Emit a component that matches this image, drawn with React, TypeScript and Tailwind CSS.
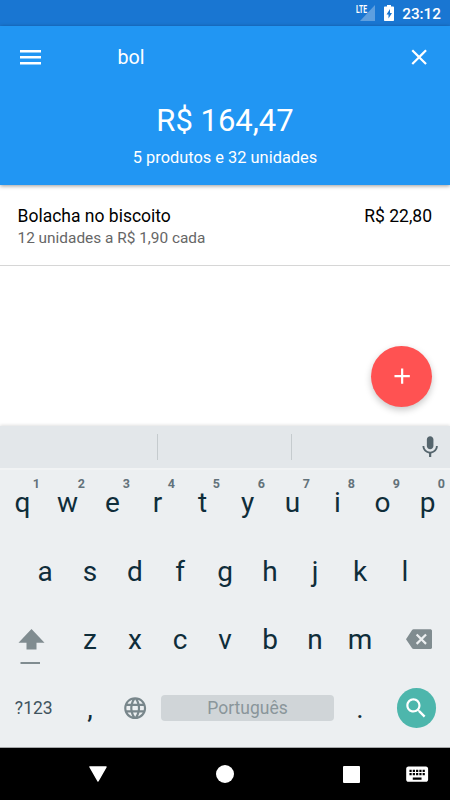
import type { ReactNode } from "react";

interface IconProps {
  path: string;
  className?: string;
}

interface Product {
  name: string;
  detail: string;
  total: string;
}

const PRODUCTS: Product[] = [
  {
    name: "Bolacha no biscoito",
    detail: "12 unidades a R$ 1,90 cada",
    total: "R$ 22,80",
  },
];

const TOP_ROW = ["q", "w", "e", "r", "t", "y", "u", "i", "o", "p"];
const HOME_ROW = ["a", "s", "d", "f", "g", "h", "j", "k", "l"];
const BOTTOM_ROW = ["z", "x", "c", "v", "b", "n", "m"];

const ICONS = {
  close:
    "M19 6.41L17.59 5 12 10.59 6.41 5 5 6.41 10.59 12 5 17.59 6.41 19 12 13.41 17.59 19 19 17.59 13.41 12z",
  add: "M19 13h-6v6h-2v-6H5v-2h6V5h2v6h6v2z",
  mic: "M12 14c1.66 0 2.99-1.34 2.99-3L15 5c0-1.66-1.34-3-3-3S9 3.34 9 5v6c0 1.66 1.34 3 3 3zm5.3-3c0 3-2.54 5.1-5.3 5.1S6.7 14 6.7 11H5c0 3.41 2.72 6.23 6 6.72V21h2v-3.28c3.28-.48 6-3.3 6-6.72h-1.7z",
  backspace:
    "M22 3H7c-.69 0-1.23.35-1.59.88L0 12l5.41 8.11c.36.53.9.89 1.59.89h15c1.1 0 2-.9 2-2V5c0-1.1-.9-2-2-2zm-3 12.59L17.59 17 14 13.41 10.41 17 9 15.59 12.59 12 9 8.41 10.41 7 14 10.59 17.59 7 19 8.41 15.41 12 19 15.59z",
  language:
    "M11.99 2C6.47 2 2 6.48 2 12s4.47 10 9.99 10C17.52 22 22 17.52 22 12S17.52 2 11.99 2zm6.93 6h-2.95c-.32-1.25-.78-2.45-1.38-3.56 1.84.63 3.37 1.91 4.33 3.56zM12 4.04c.83 1.2 1.48 2.53 1.91 3.96h-3.82c.43-1.43 1.08-2.76 1.91-3.96zM4.26 14C4.1 13.36 4 12.69 4 12s.1-1.36.26-2h3.38c-.08.66-.14 1.32-.14 2 0 .68.06 1.34.14 2H4.26zm.82 2h2.95c.32 1.25.78 2.45 1.38 3.56-1.84-.63-3.37-1.9-4.33-3.56zm2.95-8H5.08c.96-1.66 2.49-2.93 4.33-3.56C8.81 5.55 8.35 6.75 8.03 8zM12 19.96c-.83-1.2-1.48-2.53-1.91-3.96h3.82c-.43 1.43-1.08 2.76-1.91 3.96zM14.34 14H9.66c-.09-.66-.16-1.32-.16-2 0-.68.07-1.35.16-2h4.68c.09.65.16 1.32.16 2 0 .68-.07 1.34-.16 2zm.25 5.56c.6-1.11 1.06-2.31 1.38-3.56h2.95c-.96 1.65-2.49 2.93-4.33 3.56zM16.36 14c.08-.66.14-1.32.14-2 0-.68-.06-1.34-.14-2h3.38c.16.64.26 1.31.26 2s-.1 1.36-.26 2h-3.38z",
  search:
    "M15.5 14h-.79l-.28-.27C15.41 12.59 16 11.11 16 9.5 16 5.91 13.09 3 9.5 3S3 5.91 3 9.5 5.91 16 9.5 16c1.61 0 3.09-.59 4.23-1.57l.27.28v.79l5 4.99L20.49 19l-4.99-5zm-6 0C7.01 14 5 11.99 5 9.5S7.01 5 9.5 5 14 7.01 14 9.5 11.99 14 9.5 14z",
  keyboard:
    "M20 5H4c-1.1 0-1.99.9-1.99 2L2 17c0 1.1.9 2 2 2h16c1.1 0 2-.9 2-2V7c0-1.1-.9-2-2-2zm-9 3h2v2h-2V8zm0 3h2v2h-2v-2zM8 8h2v2H8V8zm0 3h2v2H8v-2zm-1 2H5v-2h2v2zm0-3H5V8h2v2zm9 7H8v-2h8v2zm0-4h-2v-2h2v2zm0-3h-2V8h2v2zm3 3h-2v-2h2v2zm0-3h-2V8h2v2z",
};

function Icon({ path, className = "size-[26.3px]" }: IconProps) {
  return (
    <svg
      className={`shrink-0 ${className}`}
      viewBox="0 0 24 24"
      fill="currentColor"
      aria-hidden="true"
    >
      <path d={path} />
    </svg>
  );
}

function StatusBar() {
  return (
    <div className="flex h-[26px] shrink-0 items-center justify-end bg-[#1976d2] pr-[9px] text-white">
      <div className="relative mr-[9px] h-4 w-[19px]">
        <span className="absolute top-0 left-0 origin-left scale-x-[0.68] text-[10px] leading-[9px] font-bold">
          LTE
        </span>
        <svg className="ml-1 h-4 w-[15px]" viewBox="0 0 15 16" aria-hidden="true">
          <path d="M15 0v16H0z" fill="#fff" fillOpacity=".3" />
        </svg>
      </div>
      <svg className="mr-2 h-4 w-[10px]" viewBox="0 0 10 16" aria-hidden="true">
        <path
          d="M3 0h4v1.6h2c.6 0 1 .4 1 1V15c0 .6-.4 1-1 1H1c-.6 0-1-.4-1-1V2.6c0-.6.4-1 1-1h2z"
          fill="#fff"
        />
        <path d="M6 4L2.5 9.5h2v4L8 8H6z" fill="#1976d2" />
      </svg>
      <span className="pt-px text-[15.3px] leading-5 font-medium">23:12</span>
    </div>
  );
}

function Header() {
  return (
    <header className="relative z-10 flex h-[159px] shrink-0 flex-col bg-[#2196f3] text-white shadow-[0_1px_4px_rgba(0,0,0,0.4)]">
      <div className="flex h-[62px] items-center pr-[17.5px] pl-5">
        <button type="button" aria-label="Menu">
          <svg className="h-[15px] w-[21px]" viewBox="0 0 21 15" aria-hidden="true">
            <path d="M0 0h21v2.5H0zM0 6h21v2.5H0zM0 12h21v2.5H0z" fill="currentColor" />
          </svg>
        </button>
        <span className="ml-[76.5px] flex-1 pt-px text-[19.7px] leading-6">bol</span>
        <button type="button" aria-label="Limpar busca">
          <Icon path={ICONS.close} />
        </button>
      </div>
      <div className="flex flex-col items-center pt-[15px]">
        <p className="text-[31px] leading-9">R$ 164,47</p>
        <p className="mt-[9px] text-[16.4px] leading-5">5 produtos e 32 unidades</p>
      </div>
    </header>
  );
}

function ProductRow({ product }: { product: Product }) {
  return (
    <li className="flex h-[81px] justify-between border-b border-[#d6d6d6] px-[17.5px] pt-5">
      <div>
        <p className="text-[17.5px] leading-[22px] text-black">{product.name}</p>
        <p className="text-[15.4px] leading-[22px] text-[#666]">{product.detail}</p>
      </div>
      <p className="pr-[0.5px] text-[17.5px] leading-[22px] text-black">{product.total}</p>
    </li>
  );
}

function Key({ label, hint }: { label: string; hint?: string }) {
  return (
    <button
      type="button"
      className="relative flex w-[45px] items-center justify-center pt-[2px] text-[28px] leading-8"
    >
      {label}
      {hint && (
        <span className="absolute top-2 right-[5px] text-[12.5px] leading-4 font-bold text-[#63727a]">
          {hint}
        </span>
      )}
    </button>
  );
}

function KeyRow({ children }: { children: ReactNode }) {
  return <div className="flex flex-1 justify-center">{children}</div>;
}

function Keyboard() {
  return (
    <section className="flex h-[322px] shrink-0 flex-col border-b border-[#a5a7a9] bg-[#eceff1] text-[#0f2d3a] shadow-[0_-1px_3px_rgba(0,0,0,0.12)]">
      <div className="flex h-[42px] shrink-0 items-center bg-[#e3e7ea] pr-[7px] shadow-[0_2px_0_#f1f3f4]">
        <div className="h-[26px] w-[158px] border-r border-[#c5cbce]" />
        <div className="h-[26px] w-[134px] border-r border-[#c5cbce]" />
        <div className="flex flex-1 justify-end text-[#55656d]">
          <Icon path={ICONS.mic} />
        </div>
      </div>

      <div className="flex h-[274px] shrink-0 flex-col">
        <KeyRow>
          {TOP_ROW.map((key, i) => (
            <Key key={key} label={key} hint={String((i + 1) % 10)} />
          ))}
        </KeyRow>
        <KeyRow>
          {HOME_ROW.map((key) => (
            <Key key={key} label={key} />
          ))}
        </KeyRow>
        <KeyRow>
          <button
            type="button"
            aria-label="Shift"
            className="flex flex-1 flex-col justify-center pt-[15px] pl-[18px] text-[#808c90]"
          >
            <svg className="h-9 w-[27px]" viewBox="0 0 27 36" aria-hidden="true">
              <path d="M13.5 0L26.5 13.7H18.5V20.5H8.5V13.7H.5zM2.5 33h19.5v2H2.5z" fill="currentColor" />
            </svg>
          </button>
          {BOTTOM_ROW.map((key) => (
            <Key key={key} label={key} />
          ))}
          <button
            type="button"
            aria-label="Apagar"
            className="flex flex-1 items-center justify-end pr-[18px] text-[#808c90]"
          >
            <Icon path={ICONS.backspace} />
          </button>
        </KeyRow>
        <KeyRow>
          <button type="button" className="w-[67.5px] pt-px text-[17.5px] text-[#3f545e]">
            ?123
          </button>
          <Key label="," />
          <button
            type="button"
            aria-label="Idioma"
            className="flex w-[45px] items-center justify-center text-[#78868b]"
          >
            <Icon path={ICONS.language} />
          </button>
          <div className="flex w-[180px] items-center px-[3.5px]">
            <button
              type="button"
              className="h-[26px] w-full rounded bg-[#d0d5d8] text-[17.5px] leading-[26px] text-[#8a969b]"
            >
              Português
            </button>
          </div>
          <Key label="." />
          <div className="flex flex-1 items-center justify-center">
            <button
              type="button"
              aria-label="Buscar"
              className="flex size-[39.5px] items-center justify-center rounded-full bg-[#4db6ac] text-white"
            >
              <Icon path={ICONS.search} />
            </button>
          </div>
        </KeyRow>
      </div>
    </section>
  );
}

function NavigationBar() {
  return (
    <nav className="flex h-[52px] shrink-0 items-center bg-black text-white">
      <svg className="ml-[89px] h-4 w-[18px]" viewBox="0 0 18 16" aria-hidden="true">
        <path
          d="M1 .9h16L9 15z"
          fill="currentColor"
          stroke="currentColor"
          strokeWidth="1.5"
          strokeLinejoin="round"
        />
      </svg>
      <div className="ml-[109px] size-[18px] rounded-full bg-white" />
      <div className="ml-[109px] size-[17px] rounded-[1px] bg-white" />
      <Icon path={ICONS.keyboard} className="ml-[44px] size-[26.3px]" />
    </nav>
  );
}

export default function App() {
  return (
    <div className="relative flex h-[800px] w-[450px] flex-col overflow-hidden bg-white font-[Roboto,sans-serif]">
      <StatusBar />
      <Header />
      <main className="flex-1">
        <ul>
          {PRODUCTS.map((product) => (
            <ProductRow key={product.name} product={product} />
          ))}
        </ul>
      </main>
      <button
        type="button"
        aria-label="Adicionar produto"
        className="absolute top-[346px] right-[17.75px] flex size-[61px] items-center justify-center rounded-full bg-[#ff5252] text-white shadow-[0_3px_7px_rgba(0,0,0,0.22)]"
      >
        <Icon path={ICONS.add} />
      </button>
      <Keyboard />
      <NavigationBar />
    </div>
  );
}
